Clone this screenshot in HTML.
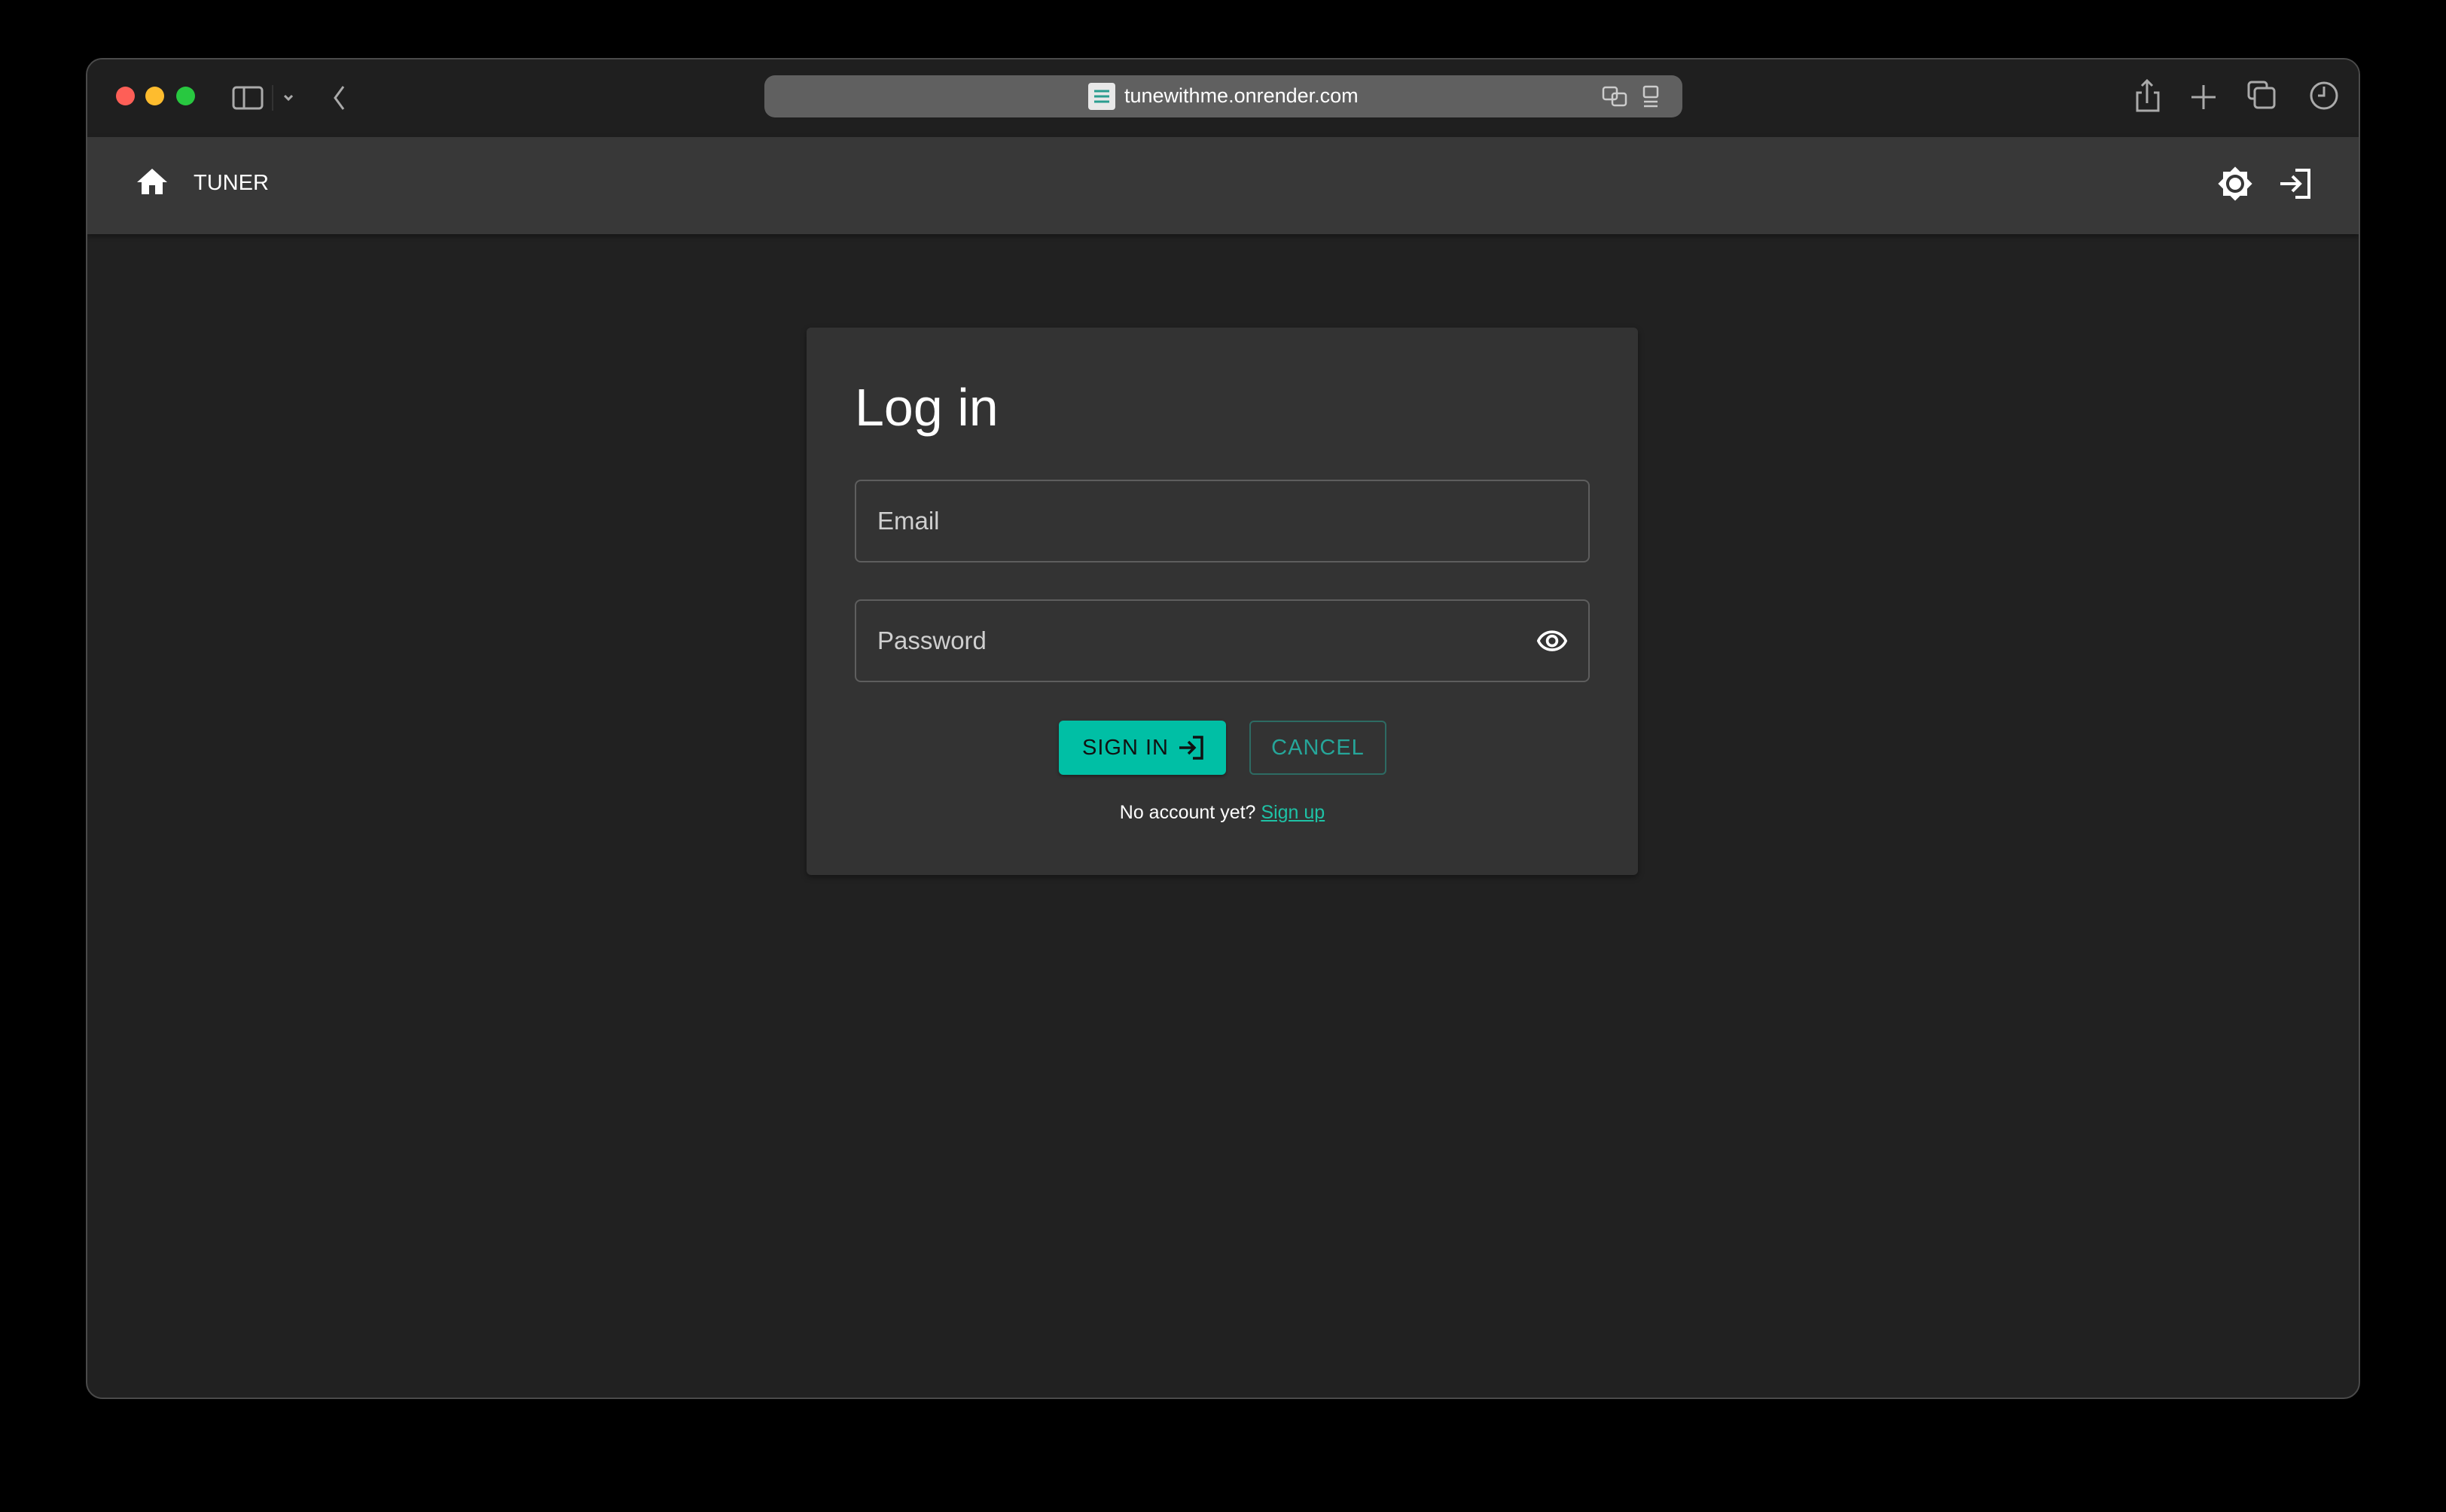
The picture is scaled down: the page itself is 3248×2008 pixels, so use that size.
<!DOCTYPE html>
<html><head><meta charset="utf-8"><style>
*{margin:0;padding:0;box-sizing:border-box}
body{width:3248px;height:2008px;background:#000;position:relative;overflow:hidden;font-family:"Liberation Sans",Arial,sans-serif}
.win{position:absolute;left:114px;top:77px;width:3020px;height:1781px;border-radius:22px;overflow:hidden;background:#212121;border:2px solid #4a4a4a}
.tb{position:absolute;left:0;top:0;width:100%;height:103px;background:#1f1f1f}
.dot{position:absolute;top:36px;width:25px;height:25px;border-radius:50%}
.url{position:absolute;left:899px;top:21px;width:1219px;height:56px;background:#606060;border-radius:14px}
.url span{position:absolute;left:478px;top:12px;color:#fff;font-size:27px}
.fav{position:absolute;left:430px;top:10px;width:36px;height:36px;background:#e8e8e8;border-radius:4px}
.nav{position:absolute;left:0;top:103px;width:100%;height:129px;background:#383838;box-shadow:0 3px 6px rgba(0,0,0,.4)}
.card{position:absolute;left:955px;top:356px;width:1104px;height:727px;background:#333;border-radius:6px;box-shadow:0 3px 8px rgba(0,0,0,.4)}
.h{position:absolute;left:64px;top:66px;color:#fff;font-size:70px}
.fld{position:absolute;left:64px;width:976px;height:110px;border:2px solid #5e5e5e;border-radius:8px}
.fld span{position:absolute;left:28px;top:34px;font-size:33px;color:#cfcfcf}
.btn{position:absolute;top:522px;height:72px;border-radius:6px;font-size:29px;line-height:72px;letter-spacing:1px}
.sm{position:absolute;top:630px;left:0;width:100%;text-align:center;color:#fff;font-size:25px}
.sm a{color:#1ec2a6;text-decoration:underline}
svg{position:absolute}
</style></head><body>
<div class="win">
 <div class="tb">
  <div class="dot" style="left:38px;background:#fe5f57"></div>
  <div class="dot" style="left:77px;background:#febc2e"></div>
  <div class="dot" style="left:118px;background:#28c840"></div>
  <svg style="left:190px;top:28px" width="170" height="44" viewBox="0 0 170 44" fill="none" stroke="#aaa" stroke-width="3"><rect x="4" y="9" width="38" height="28" rx="4"/><line x1="18" y1="9" x2="18" y2="37"/><line x1="56" y1="6" x2="56" y2="40" stroke="#333" stroke-width="2"/><path d="M72 20l5 5 5-5"/><path d="M150 8l-11 15 11 15"/></svg>
  <div class="url"><div class="fav"><svg style="left:6px;top:6px" width="24" height="24" stroke="#2a9d8f" stroke-width="3"><line x1="2" y1="5" x2="22" y2="5"/><line x1="2" y1="12" x2="22" y2="12"/><line x1="2" y1="19" x2="22" y2="19"/></svg></div><span>tunewithme.onrender.com</span>
   <svg style="left:1112px;top:12px" width="80" height="34" fill="none" stroke="#ccc" stroke-width="2.5"><rect x="2" y="4" width="18" height="16" rx="3"/><rect x="14" y="12" width="18" height="16" rx="3"/><rect x="56" y="3" width="18" height="14" rx="2"/><line x1="56" y1="23" x2="74" y2="23"/><line x1="56" y1="29" x2="74" y2="29"/></svg>
  </div>
  <svg style="left:2720px;top:26px" width="290" height="45" fill="none" stroke="#aaa" stroke-width="3"><path d="M8 18h-6v24h28v-24h-6M15 32v-30M8 9l7-7 7 7"/><path d="M90 8v32M74 24h32"/><rect x="150" y="4" width="24" height="22" rx="4"/><rect x="158" y="12" width="26" height="26" rx="4" fill="#1f1f1f"/><circle cx="250" cy="22" r="17"/><path d="M250 10v12h-8"/></svg>
 </div>
 <div class="nav">
  <svg style="left:62px;top:36px" width="48" height="48" viewBox="0 0 24 24" fill="#fff"><path d="M10 20v-6h4v6h5v-8h3L12 3 2 12h3v8z"/></svg>
  <div style="position:absolute;left:141px;top:45px;color:#fff;font-size:29px">TUNER</div>
  <svg style="left:2828px;top:38px" width="48" height="48" viewBox="0 0 24 24" fill="#fff"><path d="M20 8.69V4h-4.69L12 .69 8.69 4H4v4.69L.69 12 4 15.31V20h4.69L12 23.31 15.31 20H20v-4.69L23.31 12 20 8.69zM12 18c-3.31 0-6-2.69-6-6s2.690-6 6-6 6 2.69 6 6-2.69 6-6 6zm0-10c-2.21 0-4 1.79-4 4s1.79 4 4 4 4-1.79 4-4-1.79-4-4-4z"/></svg>
  <svg style="left:2910px;top:42px" width="44" height="40" fill="none" stroke="#fff" stroke-width="4"><path d="M2 20h26M18 10l10 10-10 10M22 2h18v36h-18"/></svg>
 </div>
 <div class="card">
  <div class="h">Log in</div>
  <div class="fld" style="top:202px"><span>Email</span></div>
  <div class="fld" style="top:361px"><span>Password</span>
   <svg style="left:900px;top:32px" width="48" height="44" viewBox="0 0 24 24" fill="#fff"><path d="M12 6a9.77 9.77 0 018.82 5.5A9.77 9.77 0 0112 17a9.77 9.77 0 01-8.82-5.5A9.77 9.77 0 0112 6m0-2C7 4 2.73 7.11 1 11.5 2.73 15.89 7 19 12 19s9.27-3.11 11-7.5C21.27 7.11 17 4 12 4zm0 5a2.5 2.5 0 010 5 2.5 2.5 0 010-5m0-2c-2.48 0-4.5 2.02-4.5 4.5S9.52 16 12 16s4.5-2.02 4.5-4.5S14.48 7 12 7z"/></svg>
  </div>
  <div class="btn" style="left:335px;width:222px;background:#00bfa5;color:#111;padding-left:31px;box-shadow:0 2px 4px rgba(0,0,0,.4)">SIGN IN
   <svg style="left:158px;top:20px" width="36" height="32" fill="none" stroke="#111" stroke-width="3.5"><path d="M2 16h20M14 8l8 8-8 8M20 2h12v28h-12"/></svg></div>
  <div class="btn" style="left:588px;width:182px;border:2px solid #2d6b63;color:#26a69a;text-align:center;line-height:68px">CANCEL</div>
  <div class="sm">No account yet? <a>Sign up</a></div>
 </div>
</div>
</body></html>
